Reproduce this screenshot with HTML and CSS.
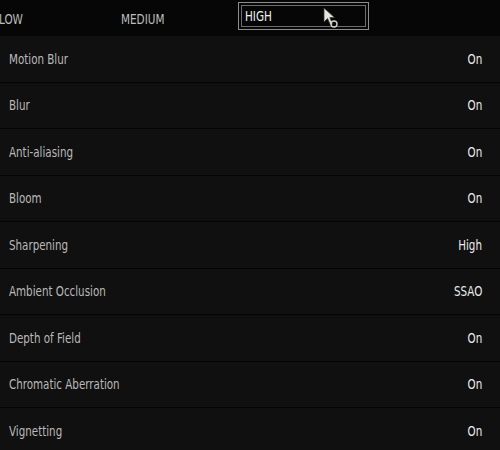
FILE: index.html
```html
<!DOCTYPE html>
<html>
<head>
<meta charset="utf-8">
<link rel="stylesheet" href="styles.css">
</head>
<body>
<div class="page">
  <div class="tabs">
    <div class="tab low"><span class="txt">LOW</span></div>
    <div class="tab medium"><span class="txt">MEDIUM</span></div>
    <div class="tab active">
      <span class="txt">HIGH</span>
      <svg class="cursor" width="16" height="22" viewBox="0 0 16 22">
        <path d="M1 1 L1 15 L4.5 11.5 L7.5 18 L9.5 17 L6.8 10.6 L11.5 10.6 Z" fill="#e8e6dc" stroke="#3a3a3a" stroke-width="0.8"/>
        <circle cx="11" cy="17" r="3" fill="none" stroke="#cfcfc4" stroke-width="1.4"/>
      </svg>
    </div>
  </div>
  <div class="list">
    <div class="row"><span class="label">Motion Blur</span><span class="value">On</span></div>
    <div class="row"><span class="label">Blur</span><span class="value">On</span></div>
    <div class="row"><span class="label">Anti-aliasing</span><span class="value">On</span></div>
    <div class="row"><span class="label">Bloom</span><span class="value">On</span></div>
    <div class="row"><span class="label">Sharpening</span><span class="value">High</span></div>
    <div class="row"><span class="label">Ambient Occlusion</span><span class="value">SSAO</span></div>
    <div class="row"><span class="label">Depth of Field</span><span class="value">On</span></div>
    <div class="row"><span class="label">Chromatic Aberration</span><span class="value">On</span></div>
    <div class="row"><span class="label">Vignetting</span><span class="value">On</span></div>
  </div>
</div>
</body>
</html>
```
FILE: styles.css
```css
html, body {
  margin: 0;
  padding: 0;
  background: #070707;
}
.page {
  width: 500px;
  height: 450px;
  overflow: hidden;
  font-family: "DejaVu Sans Condensed", "DejaVu Sans", sans-serif;
  font-stretch: condensed;
}
.tabs {
  height: 36px;
  display: flex;
  align-items: center;
  background: #060606;
  font-size: 13.5px;
  color: #bdbdbd;
}
.txt {
  display: inline-block;
  transform: scaleX(0.86);
  transform-origin: left center;
}
.tab.low {
  width: 122px;
  margin-left: -1px;
  padding-top: 1px;
}
.tab.medium {
  width: 117px;
  padding-top: 1px;
}
.tab.active {
  position: relative;
  box-sizing: border-box;
  width: 131px;
  height: 28px;
  margin-top: -4px;
  border: 1px solid #8d8d8d;
  padding: 0 0 0 6px;
  display: flex;
  align-items: center;
  color: #f0f0f0;
}
.tab.active::before {
  content: "";
  position: absolute;
  left: 2px;
  top: 2px;
  right: 2px;
  bottom: 2px;
  border: 1px solid #6e6e6e;
}
.cursor {
  position: absolute;
  left: 84px;
  top: 4px;
}
.list {
  background: #101010;
}
.row {
  box-sizing: border-box;
  height: 46.5px;
  display: flex;
  align-items: center;
  justify-content: space-between;
  padding: 0 18px 0 9px;
  border-bottom: 1.5px solid #040404;
  font-size: 13.5px;
}
.label {
  display: inline-block;
  color: #b9b9b9;
  transform: scaleX(0.85);
  transform-origin: left center;
}
.value {
  display: inline-block;
  color: #ececec;
  transform: scaleX(0.85);
  transform-origin: right center;
}
```
